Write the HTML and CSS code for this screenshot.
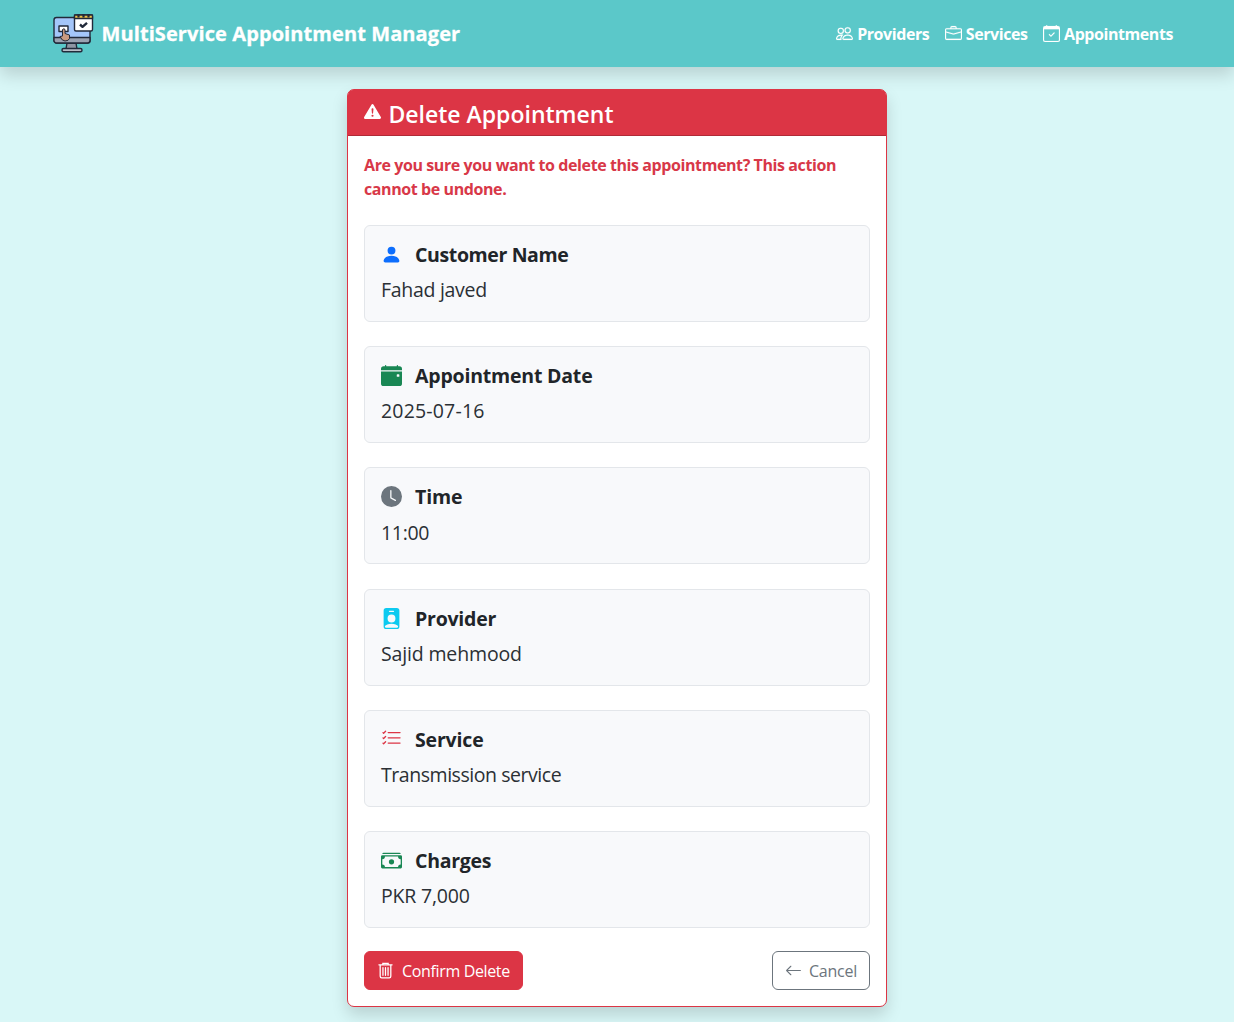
FILE: index.html
```html
<!DOCTYPE html>
<html lang="en">
<head>
<meta charset="utf-8">
<title>Delete Appointment</title>
<link rel="stylesheet" href="styles.css">
</head>
<body>
<header class="navbar">
  <div class="brand">
    <svg class="logo" viewBox="0 0 40 40" stroke="#222a3a" stroke-width="1.4" stroke-linejoin="round">
      <path d="M14 30h9l1 6H13z" fill="#8f96a3"/>
      <rect x="9" y="35.5" width="20" height="3.2" rx="1.5" fill="#b9bec8"/>
      <rect x="1" y="4.500" width="36" height="25.500" rx="2.500" fill="#a4c6fa"/>
      <path d="M1 24.500h36v3a2.500 2.500 0 0 1-2.500 2.500h-31A2.500 2.500 0 0 1 1 27.500z" fill="#9aa2b1"/>
      <rect x="6" y="13" width="9" height="5.500" fill="#fff"/>
      <path d="M9.500 16.500q1.500-1.500 2.500 0v4l4.500 1.500v3.500q-1 2.500-4.500 2.500-3 0-5-4.500l2.500-.5z" fill="#c99a80" stroke-width="1"/>
      <rect x="21.500" y="2" width="18" height="16" rx="1.500" fill="#fff"/>
      <path d="M21.500 5.500V2h18v3.500z" fill="#edc24c"/>
      <path d="M25.500 1v3.500M30.500 1v3.500M35.500 1v3.500" stroke-width="2.200"/>
      <path d="M27 11.500l2.500 2.300 4.500-4" fill="none" stroke-width="2.400"/>
    </svg>
    <span class="brand-name">MultiService Appointment Manager</span>
  </div>
  <nav class="links">
    <a class="link"><svg class="icon" viewBox="0 0 16 16"><path d="M15 14s1 0 1-1-1-4-5-4-5 3-5 4 1 1 1 1zm-7.978-1L7 12.996c.001-.264.167-1.030.76-1.720C8.312 10.629 9.282 10 11 10c1.717 0 2.687.63 3.240 1.276.593.69.758 1.457.76 1.720l-.008.002-.014.002zM11 7a2 2 0 1 0 0-4 2 2 0 0 0 0 4m3-2a3 3 0 1 1-6 0 3 3 0 0 1 6 0M6.936 9.280a6 6 0 0 0-1.230-.247A7 7 0 0 0 5 9c-4 0-5 3-5 4q0 1 1 1h4.216A2.240 2.240 0 0 1 5 13c0-1.010.377-2.042 1.090-2.904.243-.294.526-.569.846-.816M4.920 10A5.500 5.500 0 0 0 4 13H1c0-.26.164-1.030.76-1.724.545-.636 1.492-1.256 3.160-1.275ZM1.500 5.500a3 3 0 1 1 6 0 3 3 0 0 1-6 0m3-2a2 2 0 1 0 0 4 2 2 0 0 0 0-4"/></svg><span>Providers</span></a>
    <a class="link"><svg class="icon" viewBox="0 0 16 16" fill-rule="evenodd"><path d="M6.500 1A1.500 1.500 0 0 0 5 2.500V3H1.500A1.500 1.500 0 0 0 0 4.500v8A1.500 1.500 0 0 0 1.500 14h13a1.500 1.500 0 0 0 1.500-1.500v-8A1.500 1.500 0 0 0 14.500 3H11v-.5A1.500 1.500 0 0 0 9.500 1zm0 1h3a.5.5 0 0 1 .5.5V3H6v-.5a.5.5 0 0 1 .5-.5M1.500 4h13a.5.5 0 0 1 .5.5v1.616L8.129 7.948a.5.5 0 0 1-.258 0L1 6.116V4.500a.5.5 0 0 1 .5-.5M1 7.150l6.614 1.764a1.500 1.500 0 0 0 .772 0L15 7.150v5.350a.5.5 0 0 1-.5.5h-13a.5.5 0 0 1-.5-.5z"/></svg><span>Services</span></a>
    <a class="link"><svg class="icon" viewBox="0 0 16 16"><path d="M10.854 7.146a.5.5 0 0 1 0 .708l-3 3a.5.5 0 0 1-.708 0l-1.500-1.500a.5.5 0 1 1 .708-.708L7.500 9.793l2.646-2.647a.5.5 0 0 1 .708 0"/><path d="M3.500 0a.5.5 0 0 1 .5.5V1h8V.5a.5.5 0 0 1 1 0V1h1a2 2 0 0 1 2 2v11a2 2 0 0 1-2 2H2a2 2 0 0 1-2-2V3a2 2 0 0 1 2-2h1V.5a.5.5 0 0 1 .5-.5M1 4v10a1 1 0 0 0 1 1h12a1 1 0 0 0 1-1V4z"/></svg><span>Appointments</span></a>
  </nav>
</header>
<main class="card">
  <h1 class="card-header"><svg class="icon" viewBox="0 0 16 16"><path d="M8.982 1.566a1.130 1.130 0 0 0-1.960 0L.165 13.233c-.457.778.091 1.767.98 1.767h13.713c.889 0 1.438-.99.98-1.767zM8 5c.535 0 .954.462.9.995l-.35 3.507a.552.552 0 0 1-1.100 0L7.100 5.995A.905.905 0 0 1 8 5m.002 6a1 1 0 1 1 0 2 1 1 0 0 1 0-2"/></svg><span>Delete Appointment</span></h1>
  <div class="card-body">
    <p class="warning">Are you sure you want to delete this appointment? This action cannot be undone.</p>
    <div class="details">
      <section class="item">
        <h2 class="label"><svg class="icon blue" viewBox="0 0 16 16"><path d="M3 14s-1 0-1-1 1-4 6-4 6 3 6 4-1 1-1 1zm5-6a3 3 0 1 0 0-6 3 3 0 0 0 0 6"/></svg><span class="l1">Customer Name</span></h2>
        <p class="value v1">Fahad javed</p>
      </section>
      <section class="item">
        <h2 class="label"><svg class="icon green" viewBox="0 0 16 16"><path d="M4 .5a.5.5 0 0 0-1 0V1H2a2 2 0 0 0-2 2v1h16V3a2 2 0 0 0-2-2h-1V.5a.5.5 0 0 0-1 0V1H4zM16 14V5H0v9a2 2 0 0 0 2 2h12a2 2 0 0 0 2-2m-3.500-7h1a.5.5 0 0 1 .5.5v1a.5.5 0 0 1-.5.5h-1a.5.5 0 0 1-.5-.5v-1a.5.5 0 0 1 .5-.5"/></svg><span class="l2">Appointment Date</span></h2>
        <p class="value v2">2025-07-16</p>
      </section>
      <section class="item">
        <h2 class="label"><svg class="icon gray" viewBox="0 0 16 16"><path d="M16 8A8 8 0 1 1 0 8a8 8 0 0 1 16 0M8 3.500a.5.5 0 0 0-1 0V9a.5.5 0 0 0 .252.434l3.500 2a.5.5 0 0 0 .496-.868L8 8.710z"/></svg><span class="l3">Time</span></h2>
        <p class="value v3">11:00</p>
      </section>
      <section class="item">
        <h2 class="label"><svg class="icon cyan" viewBox="0 0 16 16"><path d="M2 2a2 2 0 0 1 2-2h8a2 2 0 0 1 2 2v12a2 2 0 0 1-2 2H4a2 2 0 0 1-2-2zm4.500 0a.5.5 0 0 0 0 1h3a.5.5 0 0 0 0-1zM8 11a3 3 0 1 0 0-6 3 3 0 0 0 0 6m5 2.755C12.146 12.825 10.623 12 8 12s-4.146.826-5 1.755V14a1 1 0 0 0 1 1h8a1 1 0 0 0 1-1z"/></svg><span class="l4">Provider</span></h2>
        <p class="value v4">Sajid mehmood</p>
      </section>
      <section class="item">
        <h2 class="label"><svg class="icon red" viewBox="0 0 16 16"><path d="M5 11.500a.5.5 0 0 1 .5-.5h9a.5.5 0 0 1 0 1h-9a.5.5 0 0 1-.5-.5m0-4a.5.5 0 0 1 .5-.5h9a.5.5 0 0 1 0 1h-9a.5.5 0 0 1-.5-.5m0-4a.5.5 0 0 1 .5-.5h9a.5.5 0 0 1 0 1h-9a.5.5 0 0 1-.5-.5M3.854 2.146a.5.5 0 0 1 0 .708l-1.500 1.500a.5.5 0 0 1-.708 0l-.5-.5a.5.5 0 1 1 .708-.708L2 3.293l1.146-1.147a.5.5 0 0 1 .708 0m0 4a.5.5 0 0 1 0 .708l-1.500 1.500a.5.5 0 0 1-.708 0l-.5-.5a.5.5 0 1 1 .708-.708L2 7.293l1.146-1.147a.5.5 0 0 1 .708 0m0 4a.5.5 0 0 1 0 .708l-1.500 1.500a.5.5 0 0 1-.708 0l-.5-.5a.5.5 0 0 1 .708-.708l.146.147 1.146-1.147a.5.5 0 0 1 .708 0"/></svg><span class="l5">Service</span></h2>
        <p class="value v5">Transmission service</p>
      </section>
      <section class="item">
        <h2 class="label"><svg class="icon green" viewBox="0 0 16 16"><path d="M1 3a1 1 0 0 1 1-1h12a1 1 0 0 1 1 1zm7 8a2 2 0 1 0 0-4 2 2 0 0 0 0 4"/><path d="M0 5a1 1 0 0 1 1-1h14a1 1 0 0 1 1 1v8a1 1 0 0 1-1 1H1a1 1 0 0 1-1-1zm3 0a2 2 0 0 1-2 2v4a2 2 0 0 1 2 2h10a2 2 0 0 1 2-2V7a2 2 0 0 1-2-2z"/></svg><span class="l6">Charges</span></h2>
        <p class="value v6">PKR 7,000</p>
      </section>
    </div>
    <div class="actions">
      <button class="btn danger"><svg class="icon" viewBox="0 0 16 16"><path fill="none" stroke="currentColor" stroke-width="1.2" stroke-linecap="round" d="M1.800 2.600h12.400M5.500 2.500V1.300h5v1.200M3 3v10.500a1.500 1.500 0 0 0 1.500 1.500h7a1.500 1.500 0 0 0 1.500-1.500V3M5.600 5.300v7.200M8 5.300v7.200M10.400 5.300v7.200"/></svg><span>Confirm Delete</span></button>
      <button class="btn outline"><svg class="icon" viewBox="0 0 16 16"><path fill-rule="evenodd" d="M15 8a.5.5 0 0 0-.5-.5H2.707l3.147-3.146a.5.5 0 1 0-.708-.708l-4 4a.5.5 0 0 0 0 .708l4 4a.5.5 0 0 0 .708-.708L2.707 8.500H14.500A.5.5 0 0 0 15 8"/></svg><span>Cancel</span></button>
    </div>
  </div>
</main>
</body>
</html>
```
FILE: styles.css
```css
* { box-sizing: border-box; }
body { margin: 0; min-height: 1022px; background: #d9f7f7; color: #212529; font-family: "Open Sans", "Noto Sans", sans-serif; font-size: 16px; overflow: hidden; }
h1, h2, p { margin: 0; }
span, .value { white-space: nowrap; }
.icon { display: block; flex: none; fill: currentColor; }
.navbar { display: flex; justify-content: space-between; align-items: center; height: 67px; padding: 0 61px 0 53px; background: #5bc8c9; color: #fff; box-shadow: 0 8px 16px rgba(0, 0, 0, .15); }
.brand { display: flex; align-items: center; gap: 8.5px; }
.logo { display: block; width: 40px; height: 40px; margin-top: -1px; overflow: visible; }
.brand-name { font-size: 20px; font-weight: 700; letter-spacing: .09px; -webkit-text-stroke: .3px #fff; }
.links { display: flex; gap: 15.5px; }
.link { display: flex; align-items: center; gap: 4px; font-size: 16px; font-weight: 700; line-height: 24px; letter-spacing: -.43px; }
.link .icon { width: 17px; height: 17px; margin-top: -1px; stroke: currentColor; stroke-width: .15; }
.card { width: 540px; height: 918px; margin: 22px auto 0; border: 1px solid #dc3545; border-radius: 7px; background: #fff; box-shadow: 0 8px 16px rgba(0, 0, 0, .15); }
.card-header { display: flex; align-items: center; gap: 7.5px; height: 46px; padding: 2px 16px 0; border-bottom: 1px solid #b02a37; border-radius: 5px 5px 0 0; background: #dc3545; color: #fff; font-size: 23px; font-weight: 600; line-height: 30px; }
.card-header .icon { width: 17px; height: 17px; margin-top: -4px; }
.card-body { padding: 17px 16px 16px; }
.warning { color: #d83848; font-size: 16px; font-weight: 700; line-height: 24px; letter-spacing: -.41px; }
.details { display: grid; gap: 24.2px; margin-top: 24px; }
.item { height: 97px; padding: 14px 16px; border: 1px solid #e3e6ea; border-radius: 6px; background: #f8f9fb; }
.label { display: flex; align-items: center; gap: 13px; height: 30px; font-size: 19.5px; line-height: 28px; font-weight: 700; }
.label .icon { width: 21px; height: 21px; margin-top: -1px; }
.label .red { margin-top: -3px; }
.value { margin-top: 4.2px; color: #2b3035; font-size: 19.5px; line-height: 32px; }
.l1 { letter-spacing: -.38px; }
.l2 { letter-spacing: -.2px; }
.l3 { letter-spacing: -.15px; }
.l4 { letter-spacing: -.23px; }
.l5 { letter-spacing: -.17px; }
.l6 { letter-spacing: -.28px; }
.v1 { letter-spacing: -.3px; }
.v2 { letter-spacing: .18px; }
.v3 { letter-spacing: -.3px; }
.v4 { letter-spacing: -.15px; }
.v5 { letter-spacing: -.45px; }
.v6 { letter-spacing: -.2px; }
.blue { color: #0d6efd; }
.green { color: #198754; }
.gray { color: #6c757d; }
.cyan { color: #0dcaf0; }
.red { color: #dc3545; }
.actions { display: flex; justify-content: space-between; margin-top: 23.5px; }
.btn { display: flex; align-items: center; gap: 8px; height: 39px; padding: 0 12px; border: 1px solid #dc3545; border-radius: 6px; font: 400 16px "Open Sans", "Noto Sans", sans-serif; letter-spacing: -.35px; }
.btn .icon { width: 17px; height: 17px; margin-top: -1px; }
.danger { width: 159px; background: #dc3545; color: #fff; }
.outline { width: 98px; gap: 7px; border-color: #6c757d; background: #fff; color: #6c757d; letter-spacing: -.25px; }
```
